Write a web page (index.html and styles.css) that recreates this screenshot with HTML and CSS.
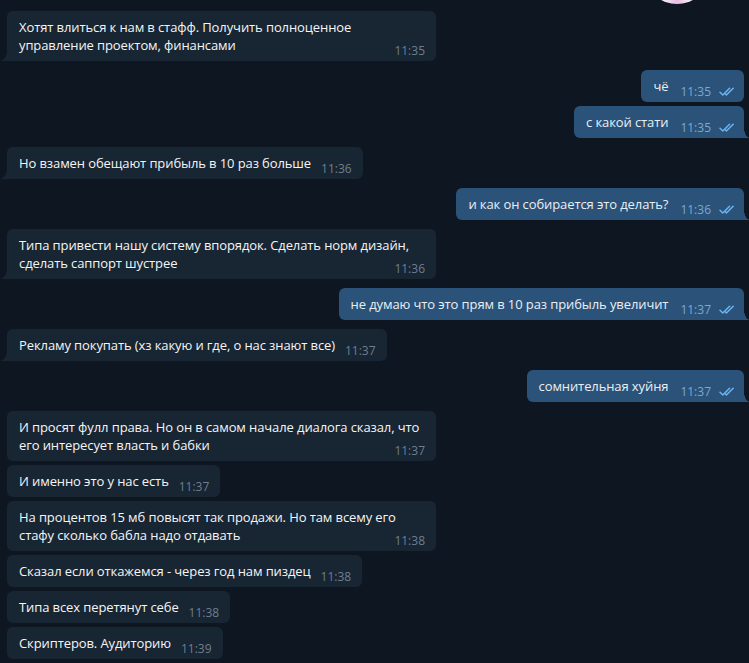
FILE: index.html
```html
<!DOCTYPE html>
<html lang="ru">
<head>
  <meta charset="UTF-8">
  <meta name="viewport" content="width=device-width, initial-scale=1.0">
  <title>Чат</title>
  <link rel="stylesheet" href="styles.css">
</head>
<body>
  <div class="chat">
    <div class="sticker"></div>

    <div class="msg in wide tail first">
      <span class="text">Хотят влиться к нам в стафф. Получить полноценное<br>управление проектом, финансами</span>
      <span class="meta">11:35</span>
    </div>

    <div class="msg out">
      <span class="text">чё</span>
      <span class="meta">11:35 <svg class="check" width="18" height="10" viewBox="0 0 18 10"><path d="M1 5.2l2.8 2.8L10.6 1.2M7.4 8L14.2 1.2M6.2 6.8L7.4 8"/></svg></span>
    </div>
    <div class="msg out next tail">
      <span class="text">с какой стати</span>
      <span class="meta">11:35 <svg class="check" width="18" height="10" viewBox="0 0 18 10"><path d="M1 5.2l2.8 2.8L10.6 1.2M7.4 8L14.2 1.2M6.2 6.8L7.4 8"/></svg></span>
    </div>

    <div class="msg in tail">
      <span class="text">Но взамен обещают прибыль в 10 раз больше</span>
      <span class="meta">11:36</span>
    </div>

    <div class="msg out tail">
      <span class="text">и как он собирается это делать?</span>
      <span class="meta">11:36 <svg class="check" width="18" height="10" viewBox="0 0 18 10"><path d="M1 5.2l2.8 2.8L10.6 1.2M7.4 8L14.2 1.2M6.2 6.8L7.4 8"/></svg></span>
    </div>

    <div class="msg in wide tail">
      <span class="text">Типа привести нашу систему впорядок. Сделать норм дизайн,<br>сделать саппорт шустрее</span>
      <span class="meta">11:36</span>
    </div>

    <div class="msg out tail">
      <span class="text">не думаю что это прям в 10 раз прибыль увеличит</span>
      <span class="meta">11:37 <svg class="check" width="18" height="10" viewBox="0 0 18 10"><path d="M1 5.2l2.8 2.8L10.6 1.2M7.4 8L14.2 1.2M6.2 6.8L7.4 8"/></svg></span>
    </div>

    <div class="msg in tail">
      <span class="text">Рекламу покупать (хз какую и где, о нас знают все)</span>
      <span class="meta">11:37</span>
    </div>

    <div class="msg out tail">
      <span class="text">сомнительная хуйня</span>
      <span class="meta">11:37 <svg class="check" width="18" height="10" viewBox="0 0 18 10"><path d="M1 5.2l2.8 2.8L10.6 1.2M7.4 8L14.2 1.2M6.2 6.8L7.4 8"/></svg></span>
    </div>

    <div class="msg in wide">
      <span class="text">И просят фулл права. Но он в самом начале диалога сказал, что<br>его интересует власть и бабки</span>
      <span class="meta">11:37</span>
    </div>
    <div class="msg in next">
      <span class="text">И именно это у нас есть</span>
      <span class="meta">11:37</span>
    </div>
    <div class="msg in wide next">
      <span class="text">На процентов 15 мб повысят так продажи. Но там всему его<br>стафу сколько бабла надо отдавать</span>
      <span class="meta">11:38</span>
    </div>
    <div class="msg in next">
      <span class="text">Сказал если откажемся - через год нам пиздец</span>
      <span class="meta">11:38</span>
    </div>
    <div class="msg in next">
      <span class="text">Типа всех перетянут себе</span>
      <span class="meta">11:38</span>
    </div>
    <div class="msg in next">
      <span class="text">Скриптеров. Аудиторию</span>
      <span class="meta">11:39</span>
    </div>
  </div>
</body>
</html>
```

FILE: styles.css
```css
body {
  margin: 0;
  height: 663px;
  overflow: hidden;
  background-color: #0e1621;
  font-family: "Open Sans", "Noto Sans", sans-serif;
  font-size: 13px;
  color: #f5f5f5;
}

.chat {
  display: flex;
  flex-direction: column;
  padding: 0 5px 0 7px;
}

.sticker {
  align-self: flex-end;
  width: 56px;
  height: 46px;
  margin-top: -42px;
  margin-right: 39px;
  border-radius: 50%;
  background: radial-gradient(ellipse at 50% 95%, #eab8e2 0, #f0e4f0 25%, #f3f1f5 50%);
}

.msg {
  position: relative;
  display: flex;
  align-items: flex-end;
  box-sizing: border-box;
  max-width: 429px;
  margin-top: 9px;
  padding: 7px 11px 7px 12px;
  border-radius: 6px;
  line-height: 18px;
}

.msg.first {
  margin-top: 7px;
}

.msg.next {
  margin-top: 4px;
}

.in {
  align-self: flex-start;
  background-color: #182533;
}

.out {
  align-self: flex-end;
  background-color: #2b5278;
  color: #e9eff5;
  padding-right: 7px;
}

.wide {
  width: 429px;
}

.text {
  flex: 1;
  white-space: nowrap;
  letter-spacing: -0.1px;
}

.wide .text {
  min-width: 0;
}

.meta {
  display: flex;
  align-items: center;
  flex-shrink: 0;
  margin-left: 10px;
  margin-bottom: -4px;
  font-size: 12px;
  line-height: 14px;
  color: #6d7f8f;
  white-space: nowrap;
}

.out .meta {
  margin-left: 12px;
  color: #7da8d3;
}

.check {
  margin-left: 8px;
  fill: none;
  stroke: #6ab3f3;
  stroke-width: 1.5;
  stroke-linecap: round;
  stroke-linejoin: round;
}

.in.tail {
  border-bottom-left-radius: 0;
}

.in.tail::before {
  content: "";
  position: absolute;
  left: -7px;
  bottom: 0;
  width: 7px;
  height: 10px;
  background: radial-gradient(ellipse 7px 10px at 0 0, transparent 96%, #182533 100%);
}

.out.tail {
  border-bottom-right-radius: 0;
}

.out.tail::after {
  content: "";
  position: absolute;
  right: -6px;
  bottom: 0;
  width: 6px;
  height: 10px;
  background: radial-gradient(ellipse 6px 10px at 100% 0, transparent 96%, #2b5278 100%);
}
```
